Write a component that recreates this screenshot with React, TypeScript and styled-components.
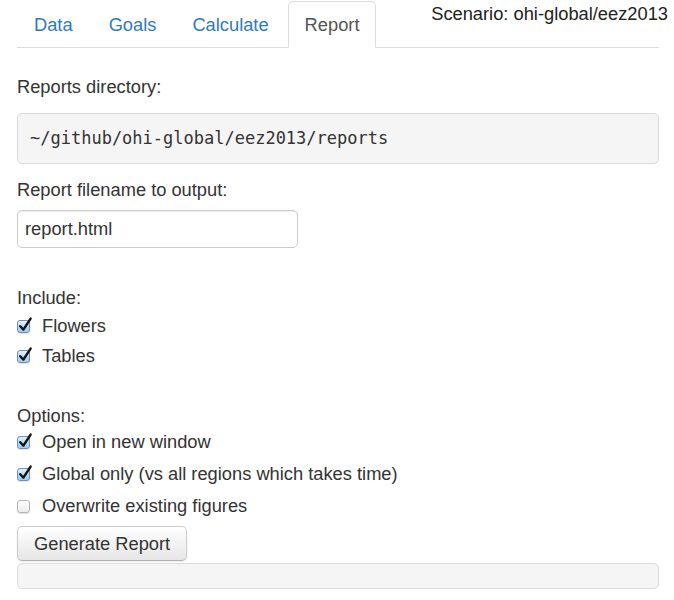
import styled, { createGlobalStyle } from 'styled-components';

const GlobalStyle = createGlobalStyle`
  html, body {
    margin: 0;
    padding: 0;
    background: #ffffff;
  }
  body {
    font-family: "Liberation Sans", Arial, Helvetica, sans-serif;
    font-size: 18.3px;
    line-height: 26px;
    color: #333333;
  }
`;

const Page = styled.div`
  position: relative;
  padding: 0 15px 0 17px;
`;

const TabBar = styled.ul`
  display: flex;
  list-style: none;
  margin: 1px 0 0 0;
  padding: 0;
  border-bottom: 1px solid #dddddd;
`;

const TabItem = styled.li`
  margin: 0 2px -1px 0;
`;

const TabLink = styled.a<{ $active?: boolean }>`
  display: block;
  padding: 10px 16px 9px;
  line-height: 26px;
  border: 1px solid ${(p) => (p.$active ? '#dddddd' : 'transparent')};
  border-bottom-color: ${(p) => (p.$active ? '#ffffff' : 'transparent')};
  border-radius: 5px 5px 0 0;
  background: ${(p) => (p.$active ? '#ffffff' : 'transparent')};
  color: ${(p) => (p.$active ? '#555555' : '#2d7bbf')};
  text-decoration: none;
  cursor: pointer;
`;

const Scenario = styled.div`
  position: absolute;
  top: 0;
  right: 6px;
  line-height: 26px;
  color: #222222;
`;

const FieldLabel = styled.div<{ $top: number }>`
  margin-top: ${(p) => p.$top}px;
  line-height: 26px;
`;

const PathBox = styled.pre`
  margin: 13px 0 0 0;
  padding: 12px;
  line-height: 25px;
  font-family: "DejaVu Sans Mono", "Liberation Mono", monospace;
  font-size: 17px;
  color: #333333;
  background: #f5f5f5;
  border: 1px solid #d9d9d9;
  border-radius: 5px;
`;

const TextInput = styled.input`
  display: block;
  box-sizing: border-box;
  margin-top: 7px;
  width: 281px;
  height: 38px;
  padding: 0 7px;
  font-family: "Liberation Sans", Arial, sans-serif;
  font-size: 18.3px;
  color: #333333;
  border: 1px solid #cccccc;
  border-radius: 5px;
  box-shadow: inset 0 1px 1px rgba(0, 0, 0, 0.075);
  outline: none;
`;

const CheckRow = styled.label<{ $top: number }>`
  display: flex;
  align-items: center;
  gap: 12px;
  margin-top: ${(p) => p.$top}px;
  line-height: 26px;
  cursor: pointer;
`;

const Box = styled.span<{ $checked: boolean }>`
  position: relative;
  box-sizing: border-box;
  width: 13px;
  height: 13px;
  margin-top: 1px;
  flex-shrink: 0;
  border-radius: 3px;
  border: 1px solid ${(p) => (p.$checked ? '#6d8fb3' : '#b3b3b3')};
  background: ${(p) =>
    p.$checked
      ? 'linear-gradient(#e6f2fd, #b8dbf7 55%, #9ccdf4)'
      : 'linear-gradient(#ffffff, #ececec)'};
  box-shadow: 0 1px 1px rgba(0, 0, 0, 0.12);
`;

const Tick = styled.svg`
  position: absolute;
  left: 0;
  top: -4px;
  width: 14px;
  height: 15px;
  overflow: visible;
`;

const Button = styled.button`
  display: block;
  margin-top: 7px;
  height: 35px;
  padding: 0 16px;
  font-family: "Liberation Sans", Arial, sans-serif;
  font-size: 18.3px;
  color: #333333;
  background: linear-gradient(#ffffff, #e6e6e6);
  border: 1px solid #cccccc;
  border-bottom-color: #b3b3b3;
  border-radius: 5px;
  box-shadow: inset 0 1px 0 rgba(255, 255, 255, 0.2), 0 1px 2px rgba(0, 0, 0, 0.08);
  cursor: pointer;
`;

const Well = styled.div`
  margin-top: 2px;
  height: 26px;
  box-sizing: border-box;
  background: #f5f5f5;
  border: 1px solid #dcdcdc;
  border-radius: 5px;
`;

const Checkbox = ({ checked, label, top }: { checked: boolean; label: string; top: number }) => (
  <CheckRow $top={top}>
    <Box $checked={checked}>
      {checked && (
        <Tick viewBox="0 0 14 15">
          <path
            d="M2.2 9.2 L5.4 12.6 L12.6 1.6"
            fill="none"
            stroke="#111111"
            strokeWidth="2.4"
            strokeLinecap="round"
            strokeLinejoin="round"
          />
        </Tick>
      )}
    </Box>
    <span>{label}</span>
  </CheckRow>
);

const tabs = ['Data', 'Goals', 'Calculate', 'Report'];

export default function App() {
  return (
    <Page>
      <GlobalStyle />
      <TabBar>
        {tabs.map((t) => (
          <TabItem key={t}>
            <TabLink $active={t === 'Report'}>{t}</TabLink>
          </TabItem>
        ))}
      </TabBar>
      <Scenario>Scenario: ohi-global/eez2013</Scenario>

      <FieldLabel $top={26}>Reports directory:</FieldLabel>
      <PathBox>~/github/ohi-global/eez2013/reports</PathBox>

      <FieldLabel $top={13}>Report filename to output:</FieldLabel>
      <TextInput defaultValue="report.html" />

      <FieldLabel $top={37}>Include:</FieldLabel>
      <Checkbox checked label="Flowers" top={2} />
      <Checkbox checked label="Tables" top={4} />

      <FieldLabel $top={34}>Options:</FieldLabel>
      <Checkbox checked label="Open in new window" top={0} />
      <Checkbox checked label="Global only (vs all regions which takes time)" top={6} />
      <Checkbox checked={false} label="Overwrite existing figures" top={6} />

      <Button>Generate Report</Button>
      <Well />
    </Page>
  );
}
